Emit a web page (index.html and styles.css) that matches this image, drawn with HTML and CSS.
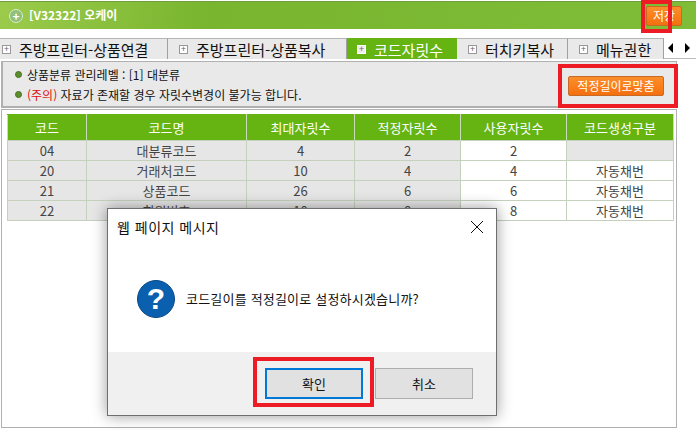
FILE: index.html
```html
<!DOCTYPE html>
<html lang="ko">

<head>
    <meta charset="UTF-8">
    <meta name="viewport" content="width=device-width, initial-scale=1.0">
    <title>코드자릿수</title>
    <link rel="stylesheet" href="styles.css">
</head>

<body>
    <div class="topbar">
        <div class="title">
            <span class="title-dot">+</span>
            <span>[V32322] 오케이</span>
        </div>
        <button class="orange-btn save-btn">저장</button>
    </div>

    <div class="tabs">
        <div class="tab tab1"><span class="plus">+</span>주방프린터-상품연결</div>
        <div class="tab tab2"><span class="plus">+</span>주방프린터-상품복사</div>
        <div class="tab tab3 active"><span class="plus">+</span>코드자릿수</div>
        <div class="tab tab4"><span class="plus">+</span>터치키복사</div>
        <div class="tab tab5"><span class="plus">+</span>메뉴권한</div>
        <div class="arrows">
            <svg width="12" height="12" viewBox="0 0 12 12"><path d="M6 1v10L1 6z" fill="#000"/></svg>
            <svg width="12" height="12" viewBox="0 0 12 12"><path d="M4 1v10l5-5z" fill="#000"/></svg>
        </div>
    </div>

    <div class="info">
        <div class="info-lines">
            <div class="info-line"><span class="bullet"></span>상품분류 관리레벨 : [1] 대분류</div>
            <div class="info-line"><span class="bullet"></span><span class="warn">(주의)</span> 자료가 존재할 경우 자릿수변경이 불가능 합니다.</div>
        </div>
        <button class="orange-btn fit-btn">적정길이로맞춤</button>
    </div>

    <div class="content">
        <table class="codes">
            <colgroup>
                <col class="c1"><col class="c2"><col class="c3"><col class="c4"><col class="c5"><col class="c6">
            </colgroup>
            <thead>
                <tr><th>코드</th><th>코드명</th><th>최대자릿수</th><th>적정자릿수</th><th>사용자릿수</th><th>코드생성구분</th></tr>
            </thead>
            <tbody>
                <tr><td class="ro">04</td><td class="ro">대분류코드</td><td class="ro">4</td><td class="ro">2</td><td>2</td><td class="ro"></td></tr>
                <tr><td class="ro">20</td><td class="ro">거래처코드</td><td class="ro">10</td><td class="ro">4</td><td>4</td><td>자동채번</td></tr>
                <tr><td class="ro">21</td><td class="ro">상품코드</td><td class="ro">26</td><td class="ro">6</td><td>6</td><td>자동채번</td></tr>
                <tr><td class="ro">22</td><td class="ro">회원번호</td><td class="ro">10</td><td class="ro">8</td><td>8</td><td>자동채번</td></tr>
            </tbody>
        </table>
    </div>

    <div class="dialog">
        <div class="dialog-head">
            <span>웹 페이지 메시지</span>
            <svg class="close" width="14" height="14" viewBox="0 0 14 14"><path d="M1 1l12 12M13 1L1 13" stroke="#111" stroke-width="1" fill="none"/></svg>
        </div>
        <div class="dialog-body">
            <svg class="question" width="38" height="38" viewBox="0 0 38 38">
                <circle cx="19" cy="19" r="18.5" fill="#0a5fae" stroke="#0b4a88"/>
                <text x="19" y="29" text-anchor="middle" class="question-mark">?</text>
            </svg>
            <span>코드길이를 적정길이로 설정하시겠습니까?</span>
        </div>
        <div class="dialog-foot">
            <button class="dlg-btn focused">확인</button>
            <button class="dlg-btn">취소</button>
        </div>
    </div>

    <div class="mark mark-save"></div>
    <div class="mark mark-fit"></div>
    <div class="mark mark-ok"></div>
</body>

</html>
```

FILE: styles.css
```css
* {
    box-sizing: border-box;
}

html,
body {
    margin: 0;
    width: 696px;
    height: 430px;
    overflow: hidden;
}

body {
    position: relative;
    background-color: #fff;
    font-family: "Noto Sans CJK KR", "Liberation Sans", sans-serif;
    color: #111;
}

.topbar {
    margin-top: 1px;
    height: 28px;
    display: flex;
    justify-content: space-between;
    align-items: center;
    padding: 0 14px 0 9px;
    background: linear-gradient(100deg, #9ccb4c 0%, #79b52f 30%, #7fbd38 100%);
    border-top: 1px solid #6f9f3a;
    color: #fff;
}

.title {
    display: flex;
    align-items: center;
    gap: 6px;
    font-size: 12px;
    font-weight: bold;
    margin-top: -3px;
}

.title-dot {
    width: 14px;
    height: 14px;
    margin-top: 4px;
    border-radius: 50%;
    background-color: #8fbf78;
    border: 1px solid #d9ead0;
    font-size: 12px;
    line-height: 11px;
    text-align: center;
}

.orange-btn {
    padding: 0;
    font-family: inherit;
    font-size: 12px;
    color: #fff;
    background: linear-gradient(#f98e2c 0%, #fb7f1b 50%, #f26f10 100%);
    border: 1px solid #c96a24;
    border-radius: 2px;
}

.save-btn {
    width: 36px;
    height: 20px;
    line-height: 16px;
}

.tabs {
    margin-top: 9px;
    height: 21px;
    display: flex;
    font-size: 15px;
}

.tab {
    display: flex;
    align-items: center;
    height: 21px;
    background-color: #e9e9e9;
    border-top: 1px solid #b5b5b5;
    border-right: 1px solid #a0a0a0;
    white-space: nowrap;
}

.tab1 {
    width: 168px;
    padding-left: 2px;
}

.tab2 {
    width: 179px;
    padding-left: 11px;
}

.tab3 {
    width: 110px;
    padding-left: 10px;
}

.tab4 {
    width: 111px;
    padding-left: 11px;
}

.tab5 {
    width: 96px;
    padding-left: 11px;
}

.tab.active {
    background-color: #66b412;
    color: #fff;
    border-color: #66b412;
}

.plus {
    width: 9px;
    height: 9px;
    margin-right: 8px;
    background-color: #fff;
    border: 1px solid #999;
    color: #666;
    font-size: 9px;
    line-height: 6px;
    text-align: center;
}

.active .plus {
    border-color: #fff;
    background-color: #eee;
}

.arrows {
    width: 32px;
    display: flex;
    align-items: center;
    justify-content: center;
    gap: 2px;
    border-bottom: 1px solid #bbb;
}

.info {
    margin: 2px 0 0 1px;
    width: 676px;
    height: 47px;
    display: flex;
    justify-content: space-between;
    padding: 2px 12px 0 12px;
    background-color: #e9e9e9;
    border: 1px solid #b0b0b0;
    border-bottom-width: 2px;
    border-left-width: 2px;
    font-size: 12px;
}

.info-line {
    display: flex;
    align-items: center;
    height: 20px;
    white-space: pre;
}

.bullet {
    width: 7px;
    height: 7px;
    margin-right: 5px;
    border-radius: 50%;
    background-color: #5b8f2a;
    border: 1px solid #4a6e26;
}

.warn {
    color: #e01010;
}

.fit-btn {
    width: 96px;
    height: 20px;
    margin: 12px 0 0 0;
    line-height: 16px;
}

.content {
    margin: 1px 0 0 1px;
    width: 676px;
    height: 319px;
    padding: 4px 0 0 5px;
    border: 1px solid #b0b0b0;
    border-left-width: 1px;
}

.codes {
    width: 666px;
    table-layout: fixed;
    border-collapse: collapse;
    border: 1px solid #6aa62c;
    border-top: 0;
    font-size: 13px;
}

.c1 {
    width: 79px;
}

.c2 {
    width: 160px;
}

.c3 {
    width: 108px;
}

.c4 {
    width: 106px;
}

.c5 {
    width: 106px;
}

.c6 {
    width: 107px;
}

.codes th {
    height: 26px;
    padding: 0;
    background-color: #66b412;
    color: #fff;
    font-weight: normal;
    border: 1px solid #c9dcb8;
    border-top: 1px solid #66b412;
    border-bottom: 0;
}

.codes td {
    height: 20px;
    padding: 0;
    text-align: center;
    color: #444;
    background-color: #fff;
    border: 1px solid #c5d0bd;
    line-height: 18px;
}

.codes td.ro {
    background-color: #e6e6e6;
}

.dialog {
    position: absolute;
    left: 107px;
    top: 208px;
    width: 390px;
    height: 208px;
    display: flex;
    flex-direction: column;
    background-color: #fff;
    border: 1px solid #6f6f6f;
    box-shadow: 0 0 14px rgba(0, 0, 0, 0.4);
    font-size: 13px;
}

.dialog-head {
    display: flex;
    justify-content: space-between;
    align-items: center;
    height: 36px;
    padding: 0 12px 0 9px;
    font-size: 14px;
    letter-spacing: 0.5px;
}

.dialog-body {
    flex: 1;
    display: flex;
    align-items: center;
    gap: 11px;
    padding: 0 0 0 29px;
    letter-spacing: 0.2px;
}

.question-mark {
    fill: #fff;
    font-family: "Liberation Sans", sans-serif;
    font-size: 30px;
    font-weight: bold;
}

.dialog-foot {
    height: 63px;
    display: flex;
    justify-content: flex-end;
    gap: 12px;
    padding: 16px 23px 0 0;
    background-color: #f0f0f0;
}

.dlg-btn {
    width: 98px;
    height: 31px;
    padding: 0;
    font-family: inherit;
    font-size: 13px;
    color: #111;
    background-color: #e1e1e1;
    border: 1px solid #adadad;
}

.dlg-btn.focused {
    border: 2px solid #0078d7;
}

.mark {
    position: absolute;
    border: 4px solid #ed1c24;
}

.mark-save {
    left: 641px;
    top: 0;
    width: 31px;
    height: 33px;
}

.mark-fit {
    left: 558px;
    top: 64px;
    width: 120px;
    height: 44px;
}

.mark-ok {
    left: 253px;
    top: 357px;
    width: 121px;
    height: 50px;
}
```
